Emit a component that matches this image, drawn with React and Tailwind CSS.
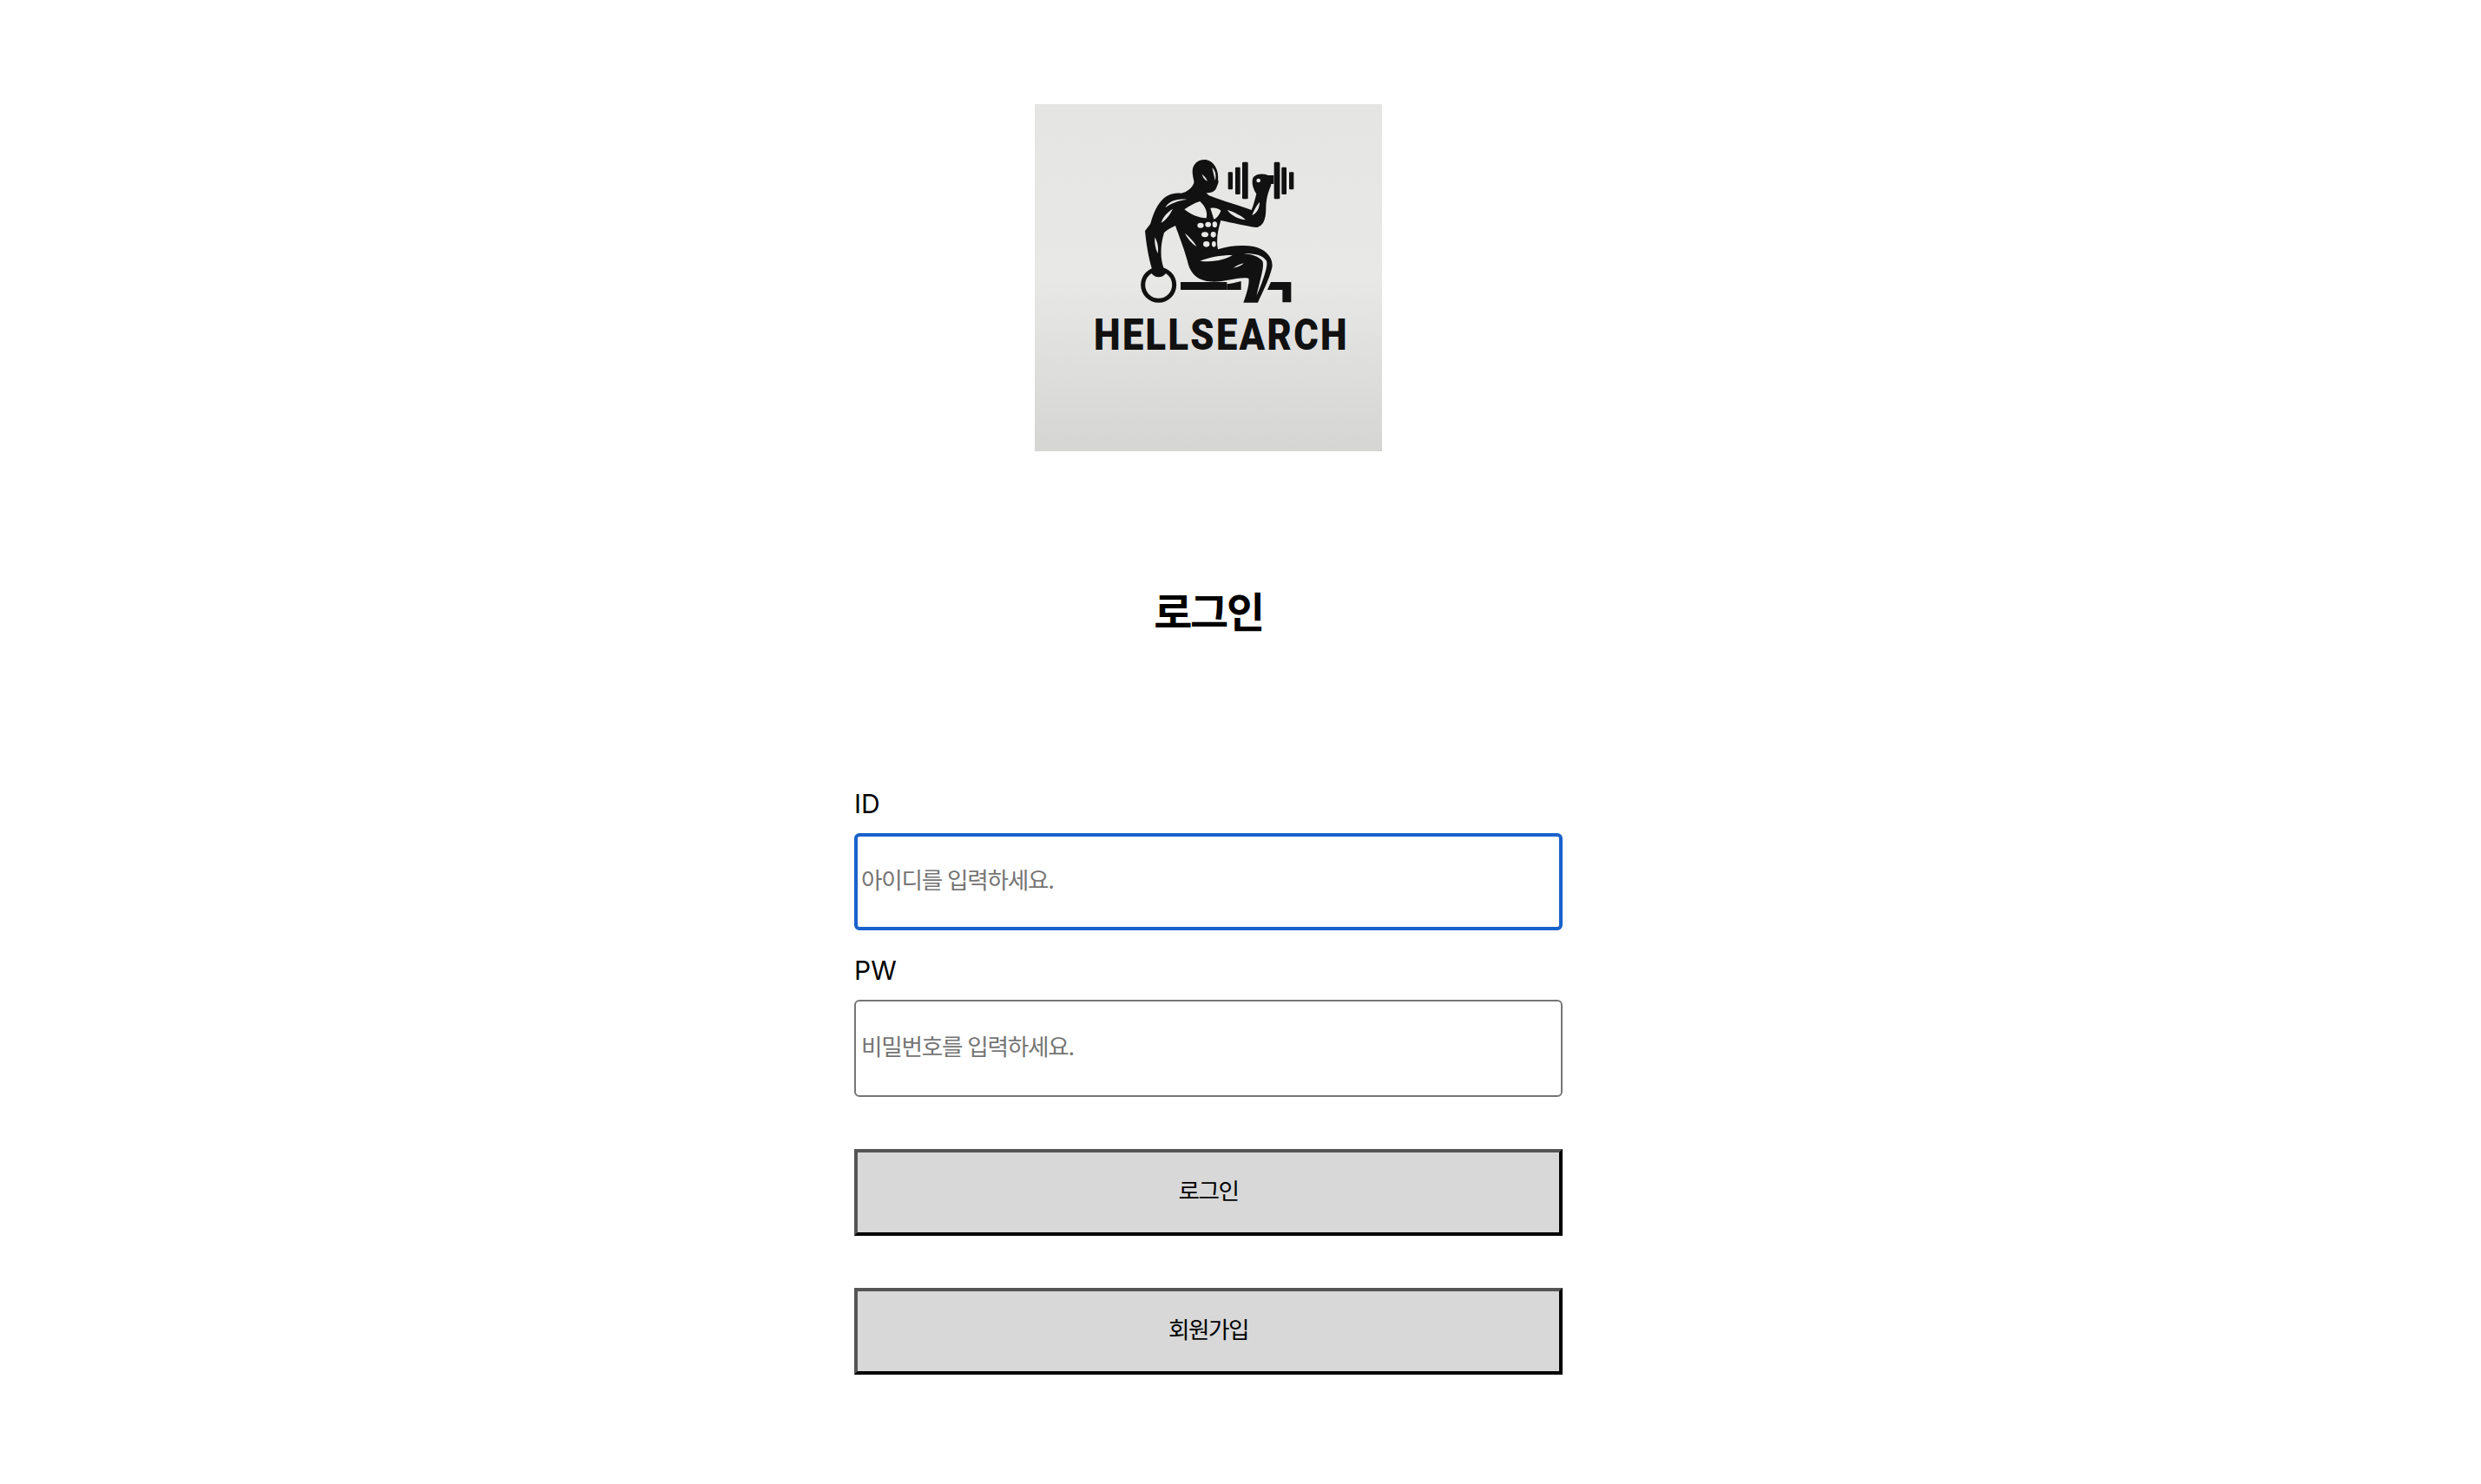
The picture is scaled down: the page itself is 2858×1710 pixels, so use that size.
import React from "react";

const Logo = () => (
  <div className="w-[400px] h-[400px] bg-gradient-to-b from-[#e5e5e4] via-[#e8e8e7] via-50% to-[#d5d5d3]">
    <svg viewBox="39 30 1200 1200" className="w-full h-full">
      {/* dumbbell */}
      <g fill="#111">
        <rect x="707" y="265" width="16" height="60" rx="3" />
        <rect x="732" y="248" width="17" height="94" rx="3" />
        <rect x="756" y="230" width="20" height="128" rx="4" />
        <rect x="866" y="230" width="20" height="128" rx="4" />
        <rect x="892" y="248" width="17" height="94" rx="3" />
        <rect x="918" y="265" width="16" height="60" rx="3" />
        <rect x="825" y="276" width="40" height="30" />
      </g>

      {/* body */}
      <path
        fill="#111"
        d="M625 222 C600 222 584 240 584 262 C584 285 592 295 588 305 C580 322 565 333 545 338 C515 335 490 345 470 372 C450 400 445 425 438 445 L420 468 C424 510 432 560 444 600 L486 600 C472 565 472 520 486 475 C498 462 515 455 525 450 C535 480 552 520 566 570 C574 610 595 632 625 640 C680 655 730 625 778 632 C782 650 770 690 760 716 L810 716 C828 675 848 640 859 595 C865 560 835 530 795 522 C755 516 710 520 672 532 C665 500 672 465 682 432 C720 440 770 452 805 456 C830 452 838 425 838 390 C838 360 845 335 855 312 L858 285 C840 268 810 268 795 282 C785 300 795 325 805 340 C800 360 795 380 788 396 C745 380 690 365 640 345 L632 337 C650 337 664 332 668 316 C672 306 676 298 672 290 C676 260 658 222 625 222 Z"
      />

      {/* highlights */}
      <g fill="#e8e8e7">
        <path d="M652 250 C664 260 667 278 662 294 C659 280 656 265 652 250 Z" />
        <path d="M617 272 C625 278 632 286 636 296 C626 292 620 284 617 272 Z" />
        <path d="M490 388 C502 366 530 355 566 360 C540 362 510 372 490 388 Z" />
        <path d="M556 394 C575 382 592 370 610 366 C630 385 637 405 632 424 C610 425 578 412 556 394 Z" />
        <path d="M646 390 C660 386 676 392 682 398 C678 412 668 424 658 428 C654 415 650 402 646 390 Z" />
        <path d="M704 396 C725 402 752 414 768 430 C745 428 718 416 704 396 Z" />
        <path d="M790 414 C796 396 806 380 816 368 C816 388 808 406 790 414 Z" />
        <circle cx="812" cy="294" r="7" />
        <path d="M476 440 C482 420 496 404 516 392 C506 412 494 430 476 440 Z" />
        <path d="M454 490 C462 505 468 525 464 546 C456 530 452 510 454 490 Z" />
        <path d="M558 476 C574 490 590 506 598 522 C582 512 566 494 558 476 Z" />
        <path d="M610 572 C640 560 680 552 722 552 C700 566 660 578 610 572 Z" />
        <path d="M760 546 C800 546 828 552 840 572 C846 592 826 644 806 692 C816 640 834 592 826 572 C812 556 790 549 760 546 Z" />
        <path d="M725 596 C740 586 750 582 762 580 C750 590 738 595 725 596 Z" />
        <ellipse cx="612" cy="449" rx="11" ry="9" />
        <ellipse cx="638" cy="446" rx="10" ry="9" />
        <ellipse cx="661" cy="446" rx="8" ry="10" />
        <ellipse cx="627" cy="481" rx="12" ry="9" />
        <ellipse cx="656" cy="481" rx="9" ry="10" />
        <ellipse cx="632" cy="514" rx="11" ry="10" />
        <ellipse cx="658" cy="514" rx="7" ry="10" />
      </g>

      {/* ring and bench */}
      <circle cx="467" cy="655" r="54" fill="none" stroke="#111" strokeWidth="15" />
      <path fill="#111" d="M444 600 L486 600 L492 615 C480 632 455 632 442 615 Z" />
      <rect x="543" y="645" width="160" height="27" fill="#111" />
      <path fill="#111" d="M703 652 C720 650 735 646 752 642 L752 672 L703 672 Z" />
      <path fill="#111" d="M843 672 L855 645 L925 645 L925 715 L895 715 L895 672 Z" />

      <text
        x="243"
        y="879"
        fill="#111"
        fontSize="148"
        fontWeight="900"
        letterSpacing="8"
        fontFamily="Roboto, sans-serif"
        textLength="882"
        lengthAdjust="spacingAndGlyphs"
      >
        HELLSEARCH
      </text>
    </svg>
  </div>
);

const Field = ({ label, placeholder, focused }) => (
  <div className="flex flex-col w-full">
    <label className="text-[30px] leading-[48px] text-black mb-[10px]">{label}</label>
    <input
      placeholder={placeholder}
      className={
        focused
          ? "w-full h-[112px] rounded-md bg-white border-4 border-[#1a62cc] pl-1 pb-1 text-[26.67px] tracking-[-1.3px] outline-none placeholder:text-[#757575]"
          : "w-full h-[112px] rounded-md bg-white border-2 border-[#767676] pl-1.5 pb-1 text-[26.67px] tracking-[-1.3px] outline-none placeholder:text-[#757575]"
      }
    />
  </div>
);

const Button = ({ children }) => (
  <button className="w-full h-[100px] pb-[5px] bg-[#d8d8d8] border-4 border-t-[#555555] border-l-[#555555] border-b-black border-r-black text-[26.67px] tracking-[-1.5px] text-black">
    {children}
  </button>
);

const App = () => {
  return (
    <div className="min-h-[1710px] bg-white font-['Inter','Noto_Sans_CJK_KR',sans-serif]">
      <div className="w-[816px] ml-[984px] pt-[120px] flex flex-col items-center">
        <Logo />
        <h2 className="mt-[150px] text-[48px] leading-[72px] font-bold tracking-[-2.4px] text-black">로그인</h2>

        <div className="w-full mt-[160px] flex flex-col gap-[22px]">
          <Field label="ID" placeholder="아이디를 입력하세요." focused />
          <Field label="PW" placeholder="비밀번호를 입력하세요." />
        </div>

        <div className="w-full mt-[60px] flex flex-col gap-[60px]">
          <Button>로그인</Button>
          <Button>회원가입</Button>
        </div>
      </div>
    </div>
  );
};

export default App;
